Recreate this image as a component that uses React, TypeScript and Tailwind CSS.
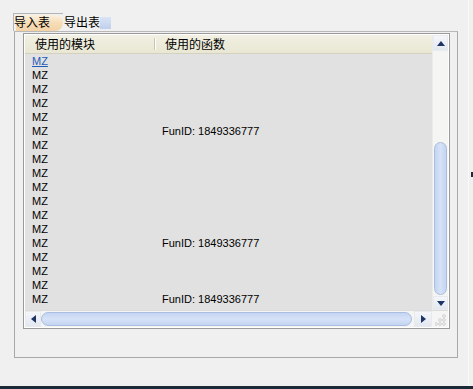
import React from 'react';

const FONT = { fontFamily: '"Liberation Sans", "Noto Sans CJK SC", sans-serif' };

const rows: { mod: string; fn?: string }[] = [
  { mod: 'MZ' },
  { mod: 'MZ' },
  { mod: 'MZ' },
  { mod: 'MZ' },
  { mod: 'MZ' },
  { mod: 'MZ', fn: 'FunID: 1849336777' },
  { mod: 'MZ' },
  { mod: 'MZ' },
  { mod: 'MZ' },
  { mod: 'MZ' },
  { mod: 'MZ' },
  { mod: 'MZ' },
  { mod: 'MZ' },
  { mod: 'MZ', fn: 'FunID: 1849336777' },
  { mod: 'MZ' },
  { mod: 'MZ' },
  { mod: 'MZ' },
  { mod: 'MZ', fn: 'FunID: 1849336777' },
];

const Arrow = ({ dir }: { dir: 'up' | 'down' | 'left' | 'right' }) => {
  const pts = {
    up: '1,6 5,1 9,6',
    down: '1,1 5,6 9,1',
    left: '6,1 1,5 6,9',
    right: '1,1 6,5 1,9',
  }[dir];
  const vertical = dir === 'up' || dir === 'down';
  return (
    <svg width={vertical ? 10 : 7} height={vertical ? 7 : 10} viewBox={vertical ? '0 0 10 7' : '0 0 7 10'}>
      <polygon points={pts} fill="#1d3566" />
    </svg>
  );
};

const ScrollButton = ({ dir, className }: { dir: 'up' | 'down' | 'left' | 'right'; className: string }) => (
  <div
    className={`flex items-center justify-center bg-gradient-to-b from-[#f4f6fa] to-[#e3e8f0] border border-[#e8eaee] ${className}`}
  >
    <Arrow dir={dir} />
  </div>
);

const Grip = () => (
  <svg width="12" height="12" viewBox="0 0 12 12">
    {[
      [9, 2],
      [9, 6],
      [5, 6],
      [9, 10],
      [5, 10],
      [1, 10],
    ].map(([cx, cy], i) => (
      <circle key={i} cx={cx} cy={cy} r="1.4" fill="none" stroke="#c6c8cc" strokeWidth="0.8" />
    ))}
  </svg>
);

export default function App() {
  return (
    <div className="w-[473px] h-[389px] bg-[#f0f0f0] flex flex-col overflow-hidden text-black" style={FONT}>
      <div className="flex-1 flex">
        <div className="w-[468px] pl-[13px] pt-[13px]">
          {/* tabs */}
          <div className="flex items-end h-[18px] text-[12px] leading-none">
            <div className="relative h-[18px] w-[50px] border-l border-t border-[#b5b5b5] flex items-center">
              <div className="absolute left-[2px] top-[1px] bottom-0 right-0 rounded-r-full bg-gradient-to-b from-[#fcf0de] via-[#f6dcb6] to-[#f3d3a6]" />
              <span className="relative">导入表</span>
            </div>
            <div className="flex items-center h-[16px]">
              <span className="pl-px">导出表</span>
              <div className="w-[11px] h-[12px] bg-gradient-to-b from-[#dbe4f5] to-[#bfcfec]" />
            </div>
          </div>

          {/* tab panel */}
          <div className="ml-px w-[444px] h-[327px] border border-[#a8a8a8] border-t-[#b8b8b8] pt-px pl-[8px]">
            <div className="w-[427px] h-[296px] border border-[#9a9a9a] bg-white p-px grid grid-cols-[1fr_16px] grid-rows-[1fr_17px]">
              {/* list */}
              <div className="flex flex-col bg-[#e1e1e1] overflow-hidden">
                <div className="h-[19px] shrink-0 flex bg-gradient-to-b from-[#f1f0e3] to-[#e9e7d3] border-b border-[#d4d2bf] text-[12px] leading-none">
                  <div className="w-[129px] pl-[10px] flex items-center pt-px">使用的模块</div>
                  <div className="w-px my-[3px] bg-[#c9c7b4] shadow-[1px_0_0_#ffffff]" />
                  <div className="pl-[10px] flex items-center pt-px">使用的函数</div>
                </div>
                <div className="text-[11px] leading-[14px]">
                  {rows.map((r, i) => (
                    <div key={i} className="flex h-[14px]">
                      <div className="w-[129px] pl-[7px]">
                        {i === 0 ? <span className="text-[#1e5bb8] underline">{r.mod}</span> : r.mod}
                      </div>
                      <div className="pl-[8px]">{r.fn ?? ''}</div>
                    </div>
                  ))}
                </div>
              </div>

              {/* vertical scrollbar */}
              <div className="flex flex-col bg-[#f5f5f3] border-l border-[#ebebeb]">
                <ScrollButton dir="up" className="h-[16px]" />
                <div className="flex-1 flex flex-col justify-end px-px pb-px">
                  <div className="h-[153px] rounded-[7px] border border-[#a9bee0] bg-gradient-to-r from-[#c4d5f2] via-[#d6e2f7] to-[#c4d5f2]" />
                </div>
                <ScrollButton dir="down" className="h-[14px]" />
              </div>

              {/* horizontal scrollbar */}
              <div className="flex bg-[#f5f5f3] border-t border-[#dcdcdc]">
                <ScrollButton dir="left" className="w-[16px]" />
                <div className="flex-1 flex items-stretch py-px pr-[2px]">
                  <div className="flex-1 rounded-[7px] border border-[#a9bee0] bg-gradient-to-b from-[#c4d5f2] via-[#d6e2f7] to-[#c4d5f2]" />
                </div>
                <ScrollButton dir="right" className="w-[18px]" />
              </div>

              {/* corner */}
              <div className="flex items-end justify-end bg-[#f5f5f3] border-t border-[#dcdcdc] pr-px pb-px">
                <Grip />
              </div>
            </div>
          </div>
        </div>
        <div className="flex-1 border-l border-[#fafafa] bg-[#f0f0f0] flex flex-col">
          <div className="mt-[172px] ml-[2px] h-[5px] bg-[#222a33]" />
        </div>
      </div>
      <div className="h-[3px] bg-[#1c2937]" />
    </div>
  );
}
